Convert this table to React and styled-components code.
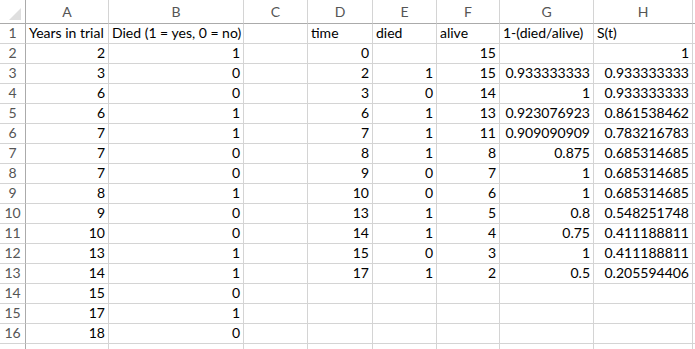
import React from "react";
import styled, { createGlobalStyle } from "styled-components";

const Global = createGlobalStyle`
  html, body { margin: 0; padding: 0; background: #ffffff; }
  body { font-family: "Lato", "Liberation Sans", sans-serif; }
`;

const COLS = ["A", "B", "C", "D", "E", "F", "G", "H"];
const WIDTHS = "26px 83px 135px 64px 65px 64px 63px 94px 99px 1fr";

const Sheet = styled.div`
  display: grid;
  grid-template-columns: ${WIDTHS};
  grid-auto-rows: 20px;
  grid-template-rows: 24px;
  width: 695px;
  height: 349px;
  overflow: hidden;
  background: #fff;
`;

const Corner = styled.div`
  position: relative;
  border-right: 1px solid #ababab;
  border-bottom: 1px solid #ababab;
  box-sizing: border-box;
  background: #fff;
`;

const ColHead = styled.div`
  box-sizing: border-box;
  border-right: 1px solid ${(p) => (p.$last ? "#fff" : "#d4d4d4")};
  border-bottom: 1px solid #ababab;
  display: flex;
  align-items: flex-end;
  justify-content: center;
  padding-bottom: 3px;
  font-size: 14px;
  color: #555;
  background: #fff;
`;

const RowHead = styled.div`
  box-sizing: border-box;
  border-right: 1px solid #ababab;
  border-bottom: 1px solid #d4d4d4;
  display: flex;
  align-items: flex-end;
  justify-content: center;
  padding-bottom: 1px;
  font-size: 14px;
  line-height: 18px;
  color: #555;
  background: #fff;
`;

const Cell = styled.div`
  box-sizing: border-box;
  border-right: 1px solid #d4d4d4;
  border-bottom: 1px solid #d4d4d4;
  display: flex;
  align-items: flex-end;
  justify-content: ${(p) => (p.$num ? "flex-end" : "flex-start")};
  padding: 0 3px 1px 3px;
  font-size: 14px;
  line-height: 18px;
  color: #000;
  white-space: nowrap;
  overflow: visible;
`;

const rows = [
  ["Years in trial", "Died (1 = yes, 0 = no)", "", "time", "died", "alive", "1-(died/alive)", "S(t)"],
  [2, 1, "", 0, "", 15, "", 1],
  [3, 0, "", 2, 1, 15, "0.933333333", "0.933333333"],
  [6, 0, "", 3, 0, 14, 1, "0.933333333"],
  [6, 1, "", 6, 1, 13, "0.923076923", "0.861538462"],
  [7, 1, "", 7, 1, 11, "0.909090909", "0.783216783"],
  [7, 0, "", 8, 1, 8, "0.875", "0.685314685"],
  [7, 0, "", 9, 0, 7, 1, "0.685314685"],
  [8, 1, "", 10, 0, 6, 1, "0.685314685"],
  [9, 0, "", 13, 1, 5, "0.8", "0.548251748"],
  [10, 0, "", 14, 1, 4, "0.75", "0.411188811"],
  [13, 1, "", 15, 0, 3, 1, "0.411188811"],
  [14, 1, "", 17, 1, 2, "0.5", "0.205594406"],
  [15, 0, "", "", "", "", "", ""],
  [17, 1, "", "", "", "", "", ""],
  [18, 0, "", "", "", "", "", ""],
  ["", "", "", "", "", "", "", ""],
];

function CornerMark() {
  return (
    <svg width="25" height="23" style={{ position: "absolute", left: 0, top: 0 }}>
      <polygon points="21,8 21,20 9,20" fill="#dfdfdf" />
    </svg>
  );
}

export default function App() {
  return (
    <>
      <Global />
      <Sheet>
        <Corner>
          <CornerMark />
        </Corner>
        {COLS.map((c) => (
          <ColHead key={c}>{c}</ColHead>
        ))}
        <ColHead $last />
        {rows.map((r, i) => (
          <React.Fragment key={i}>
            <RowHead>{i < 16 ? i + 1 : ""}</RowHead>
            {r.map((v, j) => (
              <Cell key={j} $num={i > 0 && v !== ""}>
                {v}
              </Cell>
            ))}
            <Cell />
          </React.Fragment>
        ))}
      </Sheet>
    </>
  );
}
